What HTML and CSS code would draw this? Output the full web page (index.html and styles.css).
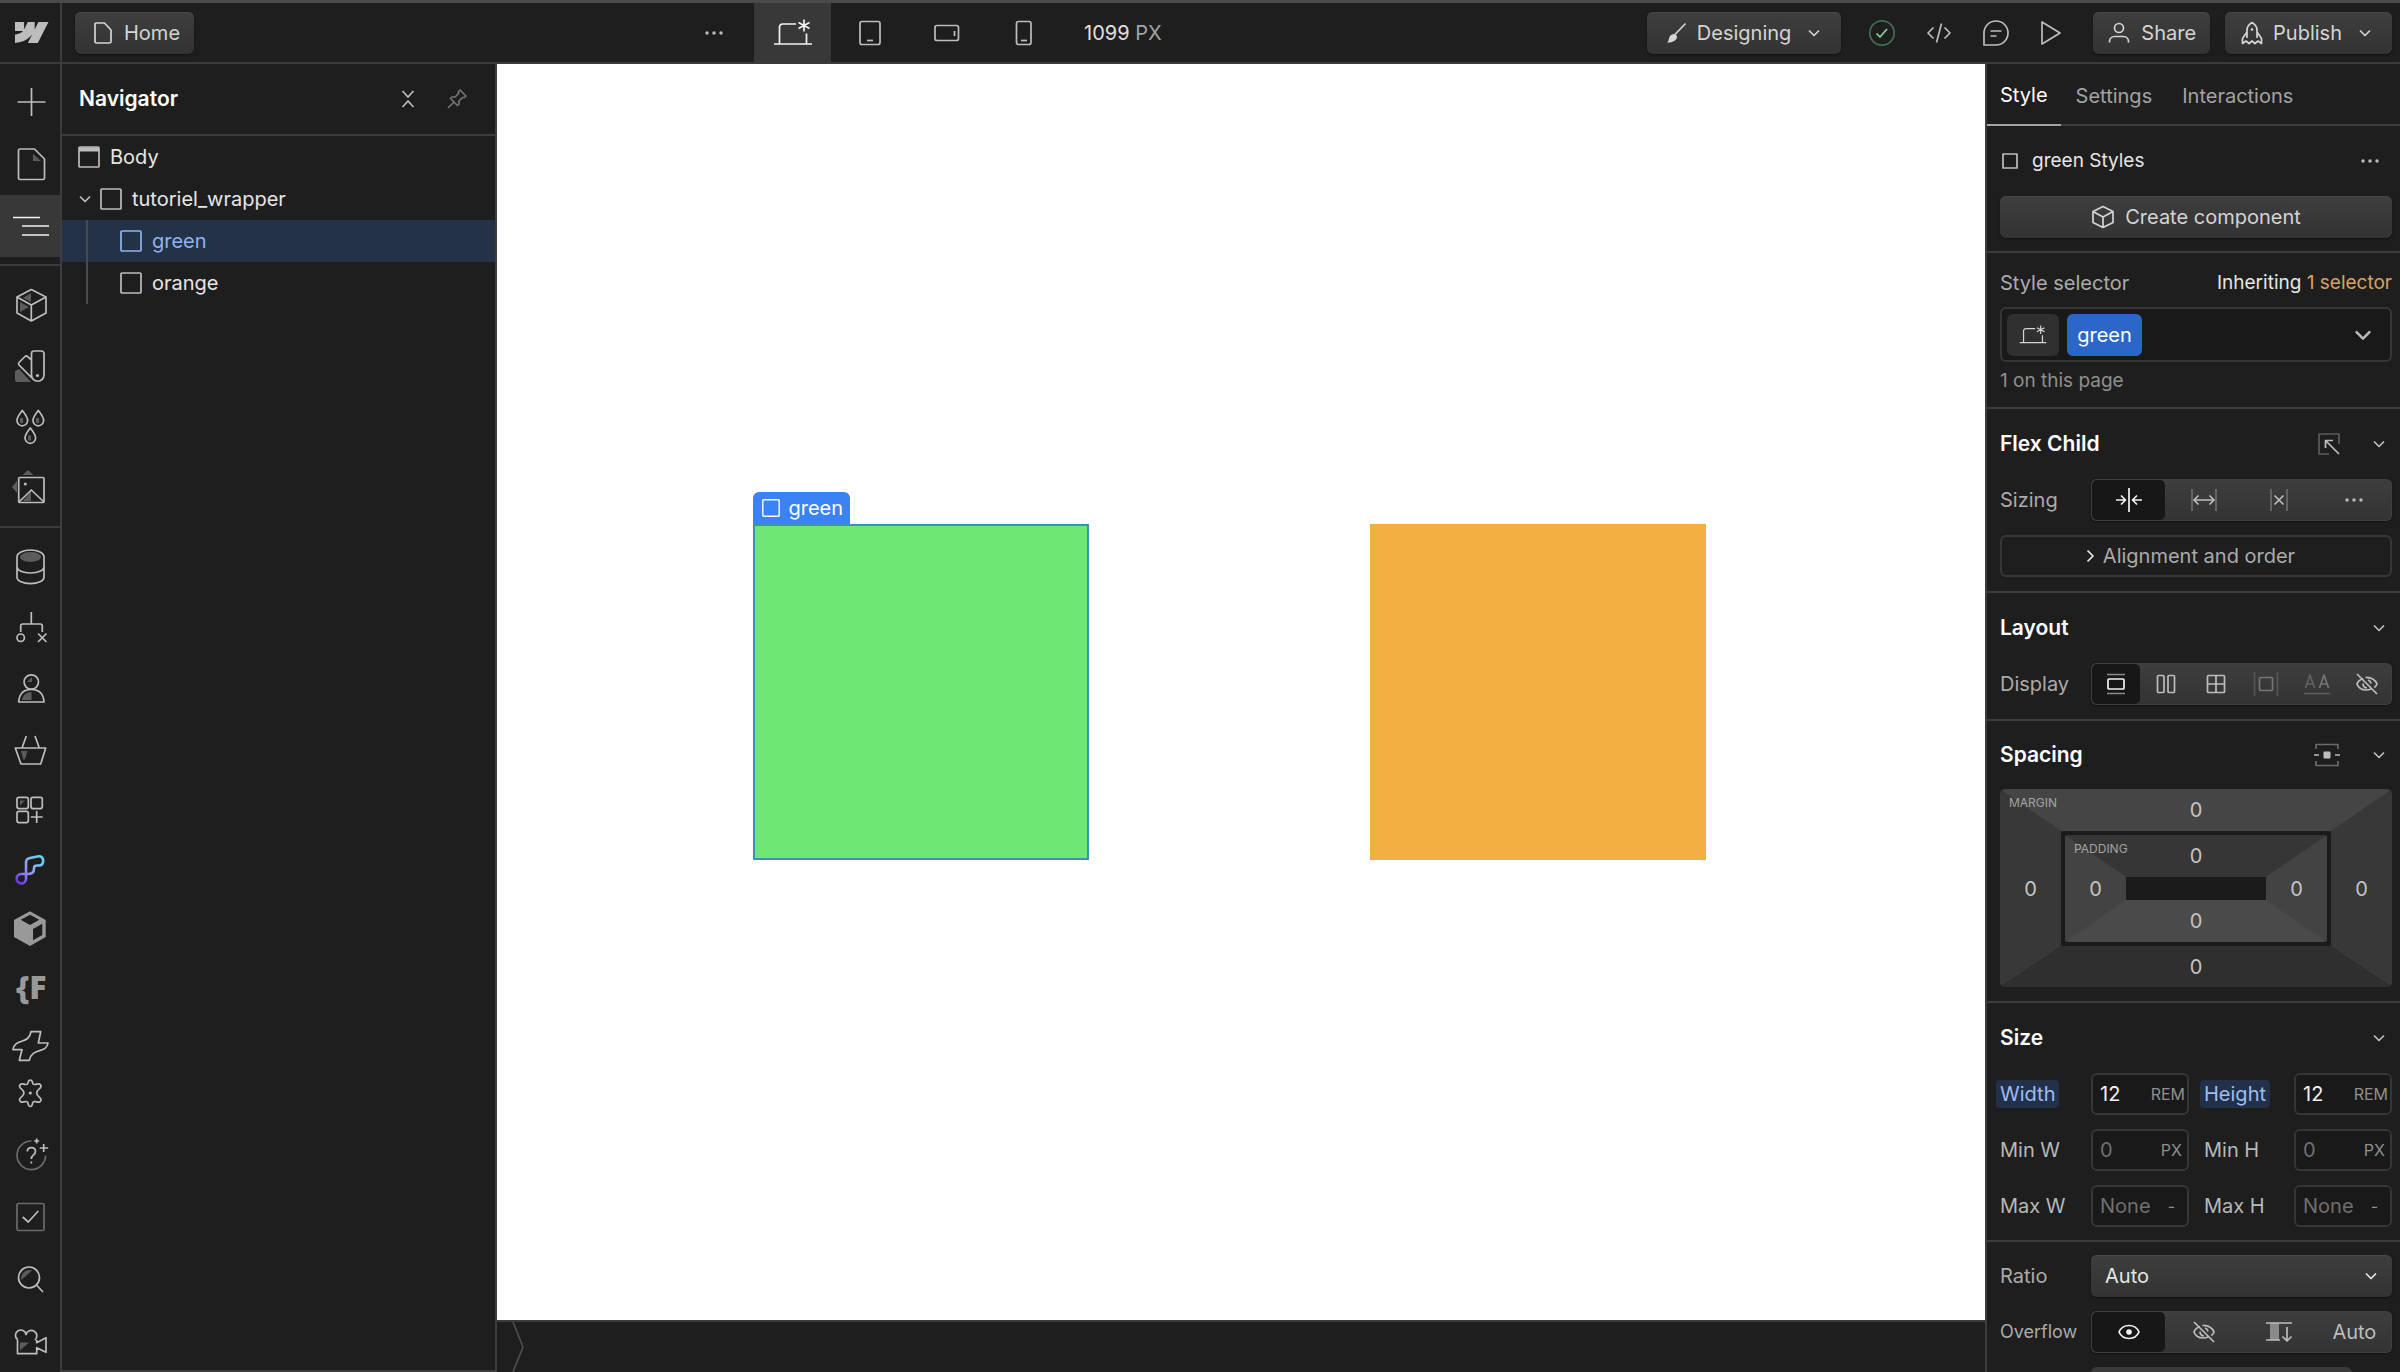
FILE: index.html
```html
<!DOCTYPE html>
<html lang="en">
<head>
<meta charset="utf-8">
<meta name="viewport" content="width=device-width, initial-scale=1">
<title>Designer – Home</title>
<link rel="stylesheet" href="styles.css">
</head>
<body>
<svg class="sprite" aria-hidden="true">
  <symbol id="i-down" viewBox="0 0 14 14"><path d="M2 4.500l5 5 5-5"/></symbol>
  <symbol id="i-dots" viewBox="0 0 20 8"><g fill="currentColor" stroke="none"><circle cx="3" cy="4" r="1.700"/><circle cx="10" cy="4" r="1.700"/><circle cx="17" cy="4" r="1.700"/></g></symbol>
  <symbol id="i-base" viewBox="0 0 40 28"><path d="M1 25h38M6.500 25V8a3 3 0 0 1 3-3H23M33.500 25V14.500M31 0.500v12M25.500 3.500l11 6M36.500 3.500l-11 6"/></symbol>
  <symbol id="i-box" viewBox="0 0 22 22"><rect x="1" y="1" width="20" height="20" rx="1"/></symbol>
  <symbol id="i-hide" viewBox="0 0 24 24"><path d="M2 2l20 20M8 6.500C4.500 8 2.500 10 2 12c1.500 4 5 6 9 6 2 0 3.500-.3 5-1M10.500 5.500C16 5 20.500 8 22 12c-.5 1.500-1.500 2.700-2.700 3.700M8 11.500a4.200 4.200 0 0 0 4 4.500M13 8a4.500 4.500 0 0 1 3 3.500"/></symbol>
</svg>

<div class="app">
  <header class="topbar">
    <a class="logo" href="#" aria-label="Dashboard"><svg width="34" height="22" viewBox="0 0 34 22"><path fill="#bdbdbd" stroke="none" d="M33.500 0 22.800 21H12.800l4.500-8.700C13.600 17.200 8 20.400 0 21v-8.500s5.100-.3 8.100-3.500H0V0h9.100v7.500L12.800 0h6.900v7.400L23.400 0z"/></svg></a>
    <div class="top-left">
      <button class="btn home"><svg width="20" height="22" viewBox="0 0 20 22"><path d="M3 1h8.500L18 8v11.500a1.500 1.500 0 0 1-1.500 1.500h-13A1.500 1.500 0 0 1 2 19.500V2a1 1 0 0 1 1-1z"/></svg>Home</button>
      <button class="plain" aria-label="More"><svg width="20" height="8"><use href="#i-dots"/></svg></button>
    </div>
    <nav class="devices" aria-label="Breakpoints">
      <button class="device on" aria-label="Base"><svg width="40" height="28"><use href="#i-base"/></svg></button>
      <button class="device" aria-label="Tablet"><svg width="22" height="26" viewBox="0 0 22 26"><rect x="1" y="1.500" width="20" height="23" rx="2"/><path d="M8 20.500h6"/></svg></button>
      <button class="device" aria-label="Mobile landscape"><svg width="26" height="18" viewBox="0 0 26 18"><rect x="1" y="1.500" width="23.500" height="15" rx="2"/><path d="M20.500 7v5"/></svg></button>
      <button class="device" aria-label="Mobile portrait"><svg width="18" height="26" viewBox="0 0 18 26"><rect x="1.500" y="1.500" width="14.500" height="23" rx="2"/><path d="M6 20.500h6"/></svg></button>
      <p class="width"><b>1099</b> PX</p>
    </nav>
    <div class="top-right">
      <button class="btn designing"><svg width="22" height="22" viewBox="0 0 22 22"><path d="M20.500 1.500 10 12.500"/><path fill="currentColor" d="M9.500 12c1.500.6 2.300 1.600 2.600 3-.6 3.500-4 5.500-10 5.500 1.500-1.200 1.600-2.500 2-4.500.6-2.600 3-4 5.400-4z" stroke="none"/></svg>Designing<svg class="end" width="14" height="14"><use href="#i-down"/></svg></button>
      <div class="tools">
        <button class="plain ok" aria-label="Saved"><svg width="28" height="28" viewBox="0 0 28 28"><circle cx="14" cy="14" r="12.200" stroke="#3f6e51"/><path d="M8.500 14.500l3.500 3.500 7-8" stroke="#7ed99b"/></svg></button>
        <button class="plain" aria-label="Code"><svg width="26" height="24" viewBox="0 0 26 24"><path d="M7.500 6.500 2 12l5.500 5.500M18.500 6.500 24 12l-5.500 5.500M15.500 2.500l-5 19"/></svg></button>
        <button class="plain" aria-label="Comments"><svg width="28" height="28" viewBox="0 0 28 28"><path d="M2 26V14A12 12 0 1 1 14 26zM8.500 12h11M8.500 17h6"/></svg></button>
        <button class="plain" aria-label="Preview"><svg width="22" height="26" viewBox="0 0 22 26"><path d="M2 2v22l18-11z"/></svg></button>
      </div>
      <button class="btn"><svg width="24" height="22" viewBox="0 0 24 22"><circle cx="12" cy="6" r="4.500"/><path d="M2.500 20.500V19a5 5 0 0 1 5-4.500h9a5 5 0 0 1 5 4.500v1.500"/></svg>Share</button>
      <button class="btn publish"><svg width="22" height="24" viewBox="0 0 22 24"><path d="M6 17V9c0-3 2.500-6 5-7.500C13.500 3 16 6 16 9v8M6 11 1.500 17.500v5L5 20l3 2.500 3-2.500 3 2.500 3-2.500 3.500 2.500v-5L16 11"/><circle cx="11" cy="8.500" r="1.300" fill="currentColor" stroke="none"/></svg>Publish<svg class="end" width="14" height="14"><use href="#i-down"/></svg></button>
    </div>
  </header>

  <aside class="rail">
    <div class="rail-group">
      <button aria-label="Add"><svg viewBox="0 0 36 36"><path d="M4.500 18h28M18.500 4v28"/></svg></button>
      <button aria-label="Pages"><svg viewBox="0 0 36 36"><path fill="#5c5c5c" stroke="none" d="M20 8l8 7h-8z"/><path d="M7 3h14.500l10 10v19a1.500 1.500 0 0 1-1.500 1.500H7A1.500 1.500 0 0 1 5.500 32V4.500A1.500 1.500 0 0 1 7 3z"/></svg></button>
      <button class="on" aria-label="Navigator"><svg viewBox="0 0 36 36"><path d="M0 9.500h27M9 18h27M9 27h27"/></svg></button>
    </div>
    <div class="rail-group">
      <button aria-label="Components"><svg viewBox="0 0 36 36"><path fill="#5c5c5c" stroke="none" d="M10 11l8-5v9zM7 15l9 5-9 5z"/><path d="M18.300 2.500 33 10v16l-14.700 8L4 26V10zM4 10l14.300 8L33 10M18.300 18v16"/></svg></button>
      <button aria-label="Variables"><svg viewBox="0 0 36 36"><path fill="#5c5c5c" stroke="none" d="M2 23l4-2 12 13H4a2 2 0 0 1-2-2z"/><path d="M18.500 5.500A2.500 2.500 0 0 1 21 3h7.500A2.500 2.500 0 0 1 31 5.500V27a6.200 6.200 0 0 1-12.500 0zM18.500 12l-4-3.500a2 2 0 0 0-2.500 0l-6 6a2 2 0 0 0 0 2.500l14 14"/><circle cx="24.500" cy="27.500" r="1.600" fill="currentColor" stroke="none"/></svg></button>
      <button aria-label="Style selectors"><svg viewBox="0 0 36 36"><path d="M9.300 1.500c-3 4-5.300 6.800-5.300 10a5.300 5.300 0 0 0 10.600 0c0-3.200-2.300-6-5.300-10zM25.300 1.500c-3 4-5.300 6.800-5.300 10a5.300 5.300 0 0 0 10.600 0c0-3.200-2.300-6-5.300-10zM17.300 19c-3 4-5.300 6.800-5.300 10a5.300 5.300 0 0 0 10.600 0c0-3.200-2.300-6-5.300-10z"/><path stroke="#5c5c5c" stroke-width="3" d="M8.500 9v5M24.500 9v5M16.500 26.500v5"/></svg></button>
      <button aria-label="Assets"><svg viewBox="0 0 36 36"><path fill="#5c5c5c" stroke="none" d="M9.500 5 15 0l5.500 5zM4 11v12l-5-6zM10 31l8-10v10z"/><rect x="5.700" y="7.500" width="25.300" height="25" rx="1"/><path d="M6 32l12.300-12L31 32"/><circle cx="12.300" cy="14" r="1.500" fill="currentColor" stroke="none"/></svg></button>
    </div>
    <div class="rail-group">
      <button aria-label="CMS"><svg viewBox="0 0 36 36"><ellipse cx="17.500" cy="8" rx="10.500" ry="5" fill="#5c5c5c" stroke="none"/><path d="M4 8c0-4 6-7 13.500-7S31 4 31 8v20c0 4-6 6.700-13.500 6.700S4 32 4 28zM4 17.500c0 4 6 6.500 13.500 6.500S31 21.500 31 17.500"/></svg></button>
      <button aria-label="Logic"><svg viewBox="0 0 36 36"><path d="M18.300 2v12M7.700 22v-6a2 2 0 0 1 2-2h17.600a2 2 0 0 1 2 2v6M25 23.500l8.500 8.500M33.500 23.500 25 32"/><circle cx="7.700" cy="27.700" r="3.700"/></svg></button>
      <button aria-label="Users"><svg viewBox="0 0 36 36"><path fill="#5c5c5c" stroke="none" d="M14 11l5-5v5zM9 29c1-5 4-8 9.500-8v8z"/><circle cx="18.300" cy="11" r="7.200"/><path d="M5.700 31c.5-8 5-12.500 12.600-12.500S30.500 23 31 31z"/></svg></button>
      <button aria-label="Ecommerce"><svg viewBox="0 0 36 36"><path fill="#5c5c5c" stroke="none" d="M8 19h6.500L12 27l-1.500 1z"/><path d="M2.300 16h30.400l-5 16H8zM13.300 4 9 16M22 4l4.300 12"/></svg></button>
      <button class="s" aria-label="Apps"><svg viewBox="0 0 36 36"><path fill="#5c5c5c" stroke="none" d="M7 8.500h5l-5 5z"/><rect x="4" y="5.300" width="11.300" height="11.300" rx="2"/><rect x="18" y="5.300" width="11.300" height="11.300" rx="2"/><rect x="4" y="19.300" width="11.300" height="11.300" rx="2"/><path d="M23.700 19v12M17.700 25h12"/></svg></button>
      <button class="s" aria-label="Flow app"><svg viewBox="0 0 36 36"><defs><linearGradient id="gf" gradientUnits="userSpaceOnUse" x1="28" y1="6" x2="6" y2="32"><stop offset="0" stop-color="#5fd6ee"/><stop offset=".35" stop-color="#8fb0f5"/><stop offset=".7" stop-color="#8a7cf0"/><stop offset="1" stop-color="#6a35e8"/></linearGradient></defs><path stroke="url(#gf)" stroke-width="2.600" d="M8.500 23h6c4 0 6.500-1.500 6.500-5v-1c0-2 1-2.500 3-2.500h2c3 0 4.200-2.500 4.200-5S28 4.800 25.500 5.300l-8.500 1.700c-3 .6-4 1.500-4 4.500V28a4.700 4.700 0 1 1-4.500-5z"/></svg></button>
      <button class="s" aria-label="Box app"><svg viewBox="0 0 36 36"><path fill="#999" stroke="none" fill-rule="evenodd" d="M17 1.300 32.700 10v17L17 36 1 27V10zM7.700 9.700 17 15l9.300-5.300L17 4.700zM20 19v11.300l9.300-5.300V13.700z"/></svg></button>
      <button class="s mark" aria-label="Finsweet app">{F</button>
      <button class="s" aria-label="Plugin"><svg viewBox="0 0 36 36"><path d="M18 3.700h9.700L25.300 15H35C33.500 26 19 19 16.300 32.300h-10L9 21.700H0C2 9.500 16 17 18 3.700z"/></svg></button>
    </div>
    <div class="rail-group last">
      <button aria-label="Site settings"><svg viewBox="0 0 36 36"><path d="M14.500 9c.8-1.200.5-4 2.800-4s2 2.800 2.800 4c1.500 1.600 4.700-.8 6.500 0 1.800 1.200 1.800 2.500.8 3.700-1 1.300-3.700 2.600-3.700 5.300s2.700 4 3.700 5.300c1 1.200 1 2.500-.8 3.700-1.800.8-5-1.600-6.500 0-.8 1.200-.5 4.500-2.800 4.500s-2-3.300-2.800-4.500c-1.500-1.600-4.700.8-6.500 0-1.800-1.200-1.800-2.500-.8-3.700 1-1.300 3.700-2.600 3.700-5.300s-2.700-4-3.700-5.300c-1-1.200-1-2.500.8-3.700 1.800-.8 5 1.600 6.500 0z"/><circle cx="17.300" cy="18" r="1.600" fill="currentColor" stroke="none"/></svg></button>
      <button aria-label="Help"><svg viewBox="0 0 36 36"><path stroke="#6b6b6b" d="M18.500 4A14.300 14.300 0 1 0 32.600 18.500"/><path d="M14.300 14.500c0-5.300 8.200-5.300 8.200 0 0 3.500-4.200 3.500-4.200 7.500M18.300 24.500v2M23.700 1.500v5M21.200 4h5M30.700 7v8M26.700 11h8.500"/></svg></button>
      <button aria-label="Audit"><svg viewBox="0 0 36 36"><rect x="4" y="4.500" width="27" height="27" rx="1.500" stroke="#6b6b6b"/><path d="M9.700 18l5.600 5 10-11"/></svg></button>
      <button aria-label="Search"><svg viewBox="0 0 36 36"><path fill="#5c5c5c" stroke="none" d="M8.500 19A8 8 0 0 1 19 9.500z"/><circle cx="16" cy="16.500" r="10.500"/><path d="M23.500 24l6.500 7"/></svg></button>
      <button aria-label="Tutorials"><svg viewBox="0 0 36 36"><path fill="#5c5c5c" stroke="none" d="M7 19.500h9l-9 8z"/><path d="M4.500 16.500A5.300 5.300 0 1 1 13 11.500a5.500 5.500 0 1 1 9 5.500M4.500 16.500v14.200h19.200v-6l9.300 4.600V14.700l-9.300 5v-2.700"/></svg></button>
    </div>
  </aside>

  <section class="navigator">
    <div class="nav-head">
      <h1>Navigator</h1>
      <button class="plain" aria-label="Collapse all"><svg width="14" height="20" viewBox="0 0 14 20"><path d="M1.500 2l5.500 6 5.500-6M1.500 18l5.500-6 5.500 6"/></svg></button>
      <button class="plain dim" aria-label="Pin"><svg width="20" height="20" viewBox="0 0 20 20"><path d="M13 1l6 6-1.500 1.500h-2L12 12v3l-1.500 1.500-7-7L5 8h3l3.500-3.500v-2zM7 13l-6 6"/></svg></button>
    </div>
    <ul class="tree">
      <li><button><svg width="22" height="22" viewBox="0 0 22 22"><rect x="1" y="1" width="20" height="20" rx="1"/><path d="M1 3.500h20" stroke-width="4"/></svg>Body</button></li>
      <li class="parent"><button class="open"><svg class="caret" width="14" height="14"><use href="#i-down"/></svg><svg width="22" height="22"><use href="#i-box"/></svg>tutoriel_wrapper</button>
        <ul>
          <li><button class="sel"><svg width="22" height="22"><use href="#i-box"/></svg>green</button></li>
          <li><button><svg width="22" height="22"><use href="#i-box"/></svg>orange</button></li>
        </ul>
      </li>
    </ul>
  </section>

  <main class="stage">
    <div class="canvas">
      <div class="block green"><span class="tag"><svg width="18" height="18" viewBox="0 0 22 22"><rect x="1" y="1" width="20" height="20" rx="1"/></svg>green</span></div>
      <div class="block orange"></div>
    </div>
    <div class="crumbs"><svg width="14" height="50" viewBox="0 0 14 50"><path d="M2 0l10 25L2 50" stroke="#4d4d4d"/></svg></div>
  </main>

  <aside class="panel">
    <nav class="tabs"><button class="on">Style</button><button>Settings</button><button>Interactions</button></nav>
    <section class="target">
      <div class="row-head"><svg width="16" height="16" viewBox="0 0 16 16"><rect x="1" y="1" width="14" height="14"/></svg><span>green Styles</span><button class="plain" aria-label="More"><svg width="20" height="8"><use href="#i-dots"/></svg></button></div>
      <button class="btn wide"><svg width="24" height="24" viewBox="0 0 24 24"><path d="M12 1.500 22 6.500v11l-10 5-10-5v-11zM2 6.500l10 5.500 10-5.500M12 12v10.500"/></svg>Create component</button>
    </section>
    <section class="selector">
      <p class="sel-head"><span>Style selector</span><span class="inherit">Inheriting <a href="#">1 selector</a></span></p>
      <div class="combo"><button class="chip" aria-label="Base breakpoint"><svg width="28" height="20"><use href="#i-base"/></svg></button><button class="chip blue">green</button><button class="plain" aria-label="Show selectors"><svg width="20" height="20" viewBox="0 0 14 14"><path d="M2 4.500l5 5 5-5"/></svg></button></div>
      <p class="note">1 on this page</p>
    </section>
    <section class="flexchild">
      <h2><span>Flex Child</span><svg width="22" height="22" viewBox="0 0 22 22"><path stroke="#5c5c5c" d="M11 21H1V1h20v10"/><path d="M21 21 8 8M7.500 15V7.500H15"/></svg><svg class="end" width="14" height="14"><use href="#i-down"/></svg></h2>
      <div class="row"><span>Sizing</span>
        <div class="seg four" role="group" aria-label="Sizing">
          <button class="on" aria-label="Shrink"><svg width="28" height="24" viewBox="0 0 28 24"><path d="M14 0v24M1 12h9M6 7.500l4.500 4.500L6 16.500M27 12h-9M22 7.500 17.500 12l4.500 4.500"/></svg></button>
          <button aria-label="Grow"><svg width="28" height="24" viewBox="0 0 28 24"><path stroke="#6b6b6b" d="M2 1v22M26 1v22"/><path d="M4 12h20M8.500 7.500 4 12l4.500 4.500M19.500 7.500 24 12l-4.500 4.500"/></svg></button>
          <button aria-label="Don't shrink or grow"><svg width="20" height="24" viewBox="0 0 20 24"><path stroke="#6b6b6b" d="M2 1v22M18 1v22"/><path d="M5.500 7.500l9 9M14.500 7.500l-9 9"/></svg></button>
          <button aria-label="Customize"><svg width="20" height="8"><use href="#i-dots"/></svg></button>
        </div>
      </div>
      <button class="outline"><svg width="10" height="14" viewBox="0 0 10 14"><path d="M2.500 1.500 8 7l-5.500 5.500"/></svg>Alignment and order</button>
    </section>
    <section class="layout">
      <h2><span>Layout</span><svg class="end" width="14" height="14"><use href="#i-down"/></svg></h2>
      <div class="row"><span>Display</span>
        <div class="seg six" role="group" aria-label="Display">
          <button class="on" aria-label="Block"><svg width="20" height="22" viewBox="0 0 20 22"><path stroke="#8a8a8a" d="M1 1.500h18M1 20.500h18"/><rect x="2" y="6" width="16" height="10" rx="1"/></svg></button>
          <button aria-label="Flex"><svg width="20" height="20" viewBox="0 0 20 20"><rect x="1.500" y="1.500" width="6.500" height="17" rx="1"/><rect x="12" y="1.500" width="6.500" height="17" rx="1"/></svg></button>
          <button aria-label="Grid"><svg width="20" height="20" viewBox="0 0 20 20"><rect x="1.500" y="1.500" width="17" height="17" rx="1"/><path d="M10 1.500v17M1.500 10h17"/></svg></button>
          <button class="dim" aria-label="Inline block"><svg width="26" height="24" viewBox="0 0 26 24"><path stroke="#555" d="M1.500 0v24M24.500 0v24"/><rect x="6.500" y="5.500" width="13" height="13" rx="1"/></svg></button>
          <button class="dim" aria-label="Inline"><svg width="26" height="22" viewBox="0 0 26 22"><path stroke="#606060" d="M1.500 15 6 2l4.500 13M3 11h6M0 20.500h26"/><path d="M15.500 15 20 2l4.500 13M17 11h6"/></svg></button>
          <button aria-label="None"><svg width="24" height="24"><use href="#i-hide"/></svg></button>
        </div>
      </div>
    </section>
    <section class="spacing">
      <h2><span>Spacing</span><svg width="26" height="24" viewBox="0 0 26 24"><path stroke="#6b6b6b" d="M2 6V1.500h22V6M2 18v4.500h22V18"/><path d="M0 12h5M21 12h5"/><rect x="9.500" y="8.500" width="7" height="7" rx="1" fill="currentColor" stroke="none"/></svg><svg class="end" width="14" height="14"><use href="#i-down"/></svg></h2>
      <div class="margin-box">
        <small>MARGIN</small>
        <button class="t">0</button><button class="l">0</button>
        <div class="padding-box">
          <small>PADDING</small>
          <button class="t">0</button><button class="l">0</button><button class="r">0</button><button class="b">0</button>
        </div>
        <button class="r">0</button><button class="b">0</button>
      </div>
    </section>
    <section class="size">
      <h2><span>Size</span><svg class="end" width="14" height="14"><use href="#i-down"/></svg></h2>
      <div class="fields">
        <label class="set" for="w"><span>Width</span></label><div class="field"><input id="w" value="12"><button>REM</button></div>
        <label class="set" for="h"><span>Height</span></label><div class="field"><input id="h" value="12"><button>REM</button></div>
        <label for="minw">Min W</label><div class="field px"><input id="minw" placeholder="0"><button>PX</button></div>
        <label for="minh">Min H</label><div class="field px"><input id="minh" placeholder="0"><button>PX</button></div>
        <label for="maxw">Max W</label><div class="field none"><input id="maxw" placeholder="None"><button>-</button></div>
        <label for="maxh">Max H</label><div class="field none"><input id="maxh" placeholder="None"><button>-</button></div>
      </div>
    </section>
    <section class="ratio">
      <div class="row"><label for="ratio">Ratio</label>
        <div class="select"><select id="ratio"><option>Auto</option></select><svg width="14" height="14"><use href="#i-down"/></svg></div></div>
      <div class="row"><span class="tight">Overflow</span>
        <div class="seg four" role="group" aria-label="Overflow">
          <button class="on" aria-label="Visible"><svg width="22" height="16" viewBox="0 0 22 16"><path d="M1 8c2-4.500 6-6.500 10-6.500S19 3.500 21 8c-2 4.500-6 6.500-10 6.500S3 12.500 1 8z"/><circle cx="11" cy="8" r="2.800" fill="currentColor" stroke="none"/></svg></button>
          <button aria-label="Hidden"><svg width="24" height="24"><use href="#i-hide"/></svg></button>
          <button aria-label="Scroll"><svg width="26" height="22" viewBox="0 0 26 22"><path fill="#8a8a8a" stroke="none" d="M4 2h9v17H4z"/><path d="M0 2h26M0 19h14M21 6v14M16.500 15.500 21 20l4.500-4.500"/></svg></button>
          <button>Auto</button>
        </div>
      </div>
      <div class="row"><span></span><div class="peek"></div></div>
    </section>
  </aside>
</div>
</body>
</html>
```
FILE: styles.css
```css
:root {
  --bg: #1e1e1e;
  --line: #3c3c3c;
  --raised: #383838;
  --text: #f2f2f2;
  --soft: #d4d4d4;
  --muted: #ababab;
}

* { box-sizing: border-box; }

body {
  margin: 0;
  background: var(--bg);
  color: var(--soft);
  font: 20px/24px Inter, "Liberation Sans", sans-serif;
}

h1, h2, p, ul { margin: 0; padding: 0; }
ul { list-style: none; }
button, input, select { font: inherit; color: inherit; margin: 0; }
button { padding: 0; border: 0; background: none; cursor: pointer; }
svg { flex: none; fill: none; stroke: currentColor; stroke-width: 1.7; stroke-linejoin: round; overflow: visible; }
.sprite { position: absolute; width: 0; height: 0; }

.app {
  display: grid;
  grid-template: 64px minmax(0, 1fr) / 62px 435px minmax(0, 1fr) 415px;
  height: 100vh;
  overflow: hidden;
}

/* Top bar */
.topbar {
  grid-column: 1 / -1;
  display: flex;
  border-top: 3px solid #4a4a4d;
  border-bottom: 2px solid var(--line);
}
.logo {
  width: 62px;
  display: flex;
  align-items: center;
  justify-content: center;
  padding-left: 3px;
  border-right: 2px solid var(--line);
}
.top-left {
  width: 692px;
  display: flex;
  align-items: center;
  justify-content: space-between;
  padding: 0 30px 0 13px;
}
.plain { display: flex; align-items: center; justify-content: center; color: #bdbdbd; }
.dim { color: #757575; }
.btn {
  display: flex;
  align-items: center;
  justify-content: center;
  gap: 10px;
  height: 42px;
  padding: 0 14px;
  border-radius: 6px;
  background: linear-gradient(#3e3e3e, #333);
  box-shadow: inset 0 1px #484848, 0 1px 2px #111;
  color: #d4d4d4;
}
.btn .end { margin-left: 6px; }
.home { padding: 0 14px 0 18px; gap: 11px; }
.devices { display: flex; align-items: stretch; }
.device { width: 77px; display: flex; align-items: center; justify-content: center; color: #bdbdbd; }
.device.on { background: var(--raised); color: #f2f2f2; }
.width { align-self: center; margin-left: 22px; color: #a3a3a3; }
.width b { font-weight: 400; color: #e0e0e0; }
.top-right { flex: 1; display: flex; align-items: center; justify-content: flex-end; gap: 15px; padding-right: 8px; }
.designing { padding: 0 20px 0 18px; }
.publish { padding: 0 20px 0 16px; }
.tools { display: flex; gap: 30px; padding: 0 16px 0 12px; }

/* Icon rail */
.rail { display: flex; flex-direction: column; border-right: 2px solid var(--line); min-height: 0; }
.rail-group { padding: 8px 0; border-bottom: 2px solid var(--line); }
.rail-group button { display: flex; align-items: center; justify-content: center; width: 60px; height: 61px; padding-left: 2px; color: #bdbdbd; }
.rail-group svg { width: 36px; height: 36px; }
.rail-group .on { background: var(--raised); color: #f2f2f2; }
.rail-group .s { height: 59px; }
.rail-group:first-child { padding: 7px 0; }
.rail-group:first-child button { height: 62px; }
.rail-group:nth-child(3) { flex: 1; min-height: 0; padding-bottom: 0; border: 0; }
.rail-group.last { padding: 0; border: 0; }
.rail-group.last button { height: 62px; }
.rail-group .mark { font: 800 32px/40px "Open Sans", "Liberation Sans", sans-serif; color: #999; }

/* Navigator */
.navigator { border-right: 2px solid var(--line); border-bottom: 2px solid var(--line); }
.nav-head { display: flex; align-items: center; gap: 32px; height: 72px; padding: 0 28px 0 17px; border-bottom: 2px solid var(--line); }
h1, h2 { font-size: 21px; line-height: 24px; font-weight: 600; color: #fff; }
h1 { flex: 1; }
.tree button { display: flex; align-items: center; gap: 10px; width: 100%; height: 42px; padding-left: 16px; color: #e6e6e6; }
.tree svg { color: #bdbdbd; }
.tree .caret { margin-right: -2px; }
.parent { position: relative; }
.parent ul button { padding-left: 58px; }
.parent ul::before { content: ""; position: absolute; left: 24px; top: 42px; bottom: 0; width: 2px; background: #444b55; }
.tree .sel { background: #243248; color: #8fb4f0; }
.tree .sel svg { color: #8fb4f0; }

/* Canvas */
.stage { display: flex; flex-direction: column; min-width: 0; }
.canvas { flex: 1; display: flex; align-items: center; justify-content: center; gap: 281px; padding-right: 24px; background: #fff; }
.block { position: relative; width: 336px; height: 336px; }
.green { background: #6ee872; border: 2px solid #3f8fb8; }
.orange { background: #f3b042; }
.tag {
  position: absolute;
  left: -2px;
  bottom: 100%;
  margin-bottom: 2px;
  display: flex;
  align-items: center;
  gap: 9px;
  height: 32px;
  padding: 0 7px 0 9px;
  border-radius: 6px 6px 0 0;
  background: #3b82f6;
  color: #fff;
}
.crumbs { height: 52px; padding-left: 14px; border-top: 2px solid var(--line); }

/* Style panel */
.panel { border-left: 2px solid var(--line); overflow: hidden; min-height: 0; }
.panel section { padding: 0 8px 0 13px; border-bottom: 2px solid var(--line); }
.tabs { display: flex; height: 62px; border-bottom: 2px solid var(--line); }
.tabs button { height: 62px; padding: 2px 15px 0; color: #a3a3a3; }
.tabs .on { padding: 2px 13px 0; color: #fff; border-bottom: 2px solid #a3a3a3; }
.row-head { display: flex; align-items: center; gap: 14px; height: 70px; padding: 0 12px 0 2px; font-size: 19px; color: #e6e6e6; }
.row-head svg { color: #bdbdbd; }
.row-head span { flex: 1; }
.wide { width: 100%; }
.panel .target { padding-bottom: 13px; }
.sel-head { display: flex; justify-content: space-between; padding: 18px 0 12px; color: var(--muted); }
.inherit { font-size: 19px; color: #e6e6e6; }
.inherit a { color: #d9a163; text-decoration: none; }
.combo { display: flex; align-items: center; gap: 8px; height: 55px; padding: 0 17px 0 5px; border: 2px solid #363636; border-radius: 6px; background: #191919; }
.combo .plain { margin-left: auto; }
.chip { display: flex; align-items: center; justify-content: center; width: 52px; height: 42px; border-radius: 6px; background: #303030; color: #d4d4d4; }
.blue { width: 75px; background: #2b67c9; color: #fff; }
.note { padding: 7px 0 14px; font-size: 19px; color: #8f8f8f; }
h2 { display: flex; align-items: center; height: 70px; padding-right: 6px; color: #fff; }
.spacing h2 { height: 68px; }
h2 span { flex: 1; }
h2 svg { color: #bdbdbd; }
h2 .end { margin-left: 32px; }
.row { display: grid; grid-template-columns: 91px 1fr; align-items: center; color: var(--muted); }
.tight { font-size: 18px; }
.seg { display: grid; height: 42px; border-radius: 6px; background: linear-gradient(#3e3e3e, #333); box-shadow: inset 0 0 0 1px #404040, 0 1px 2px #111; }
.four { grid-template-columns: repeat(4, 1fr); }
.six { grid-template-columns: 50px repeat(5, 1fr); }
.seg button { display: flex; align-items: center; justify-content: center; color: #bdbdbd; }
.seg .on { margin: 1px; border-radius: 5px; background: #171717; color: #f2f2f2; }
.seg .dim { color: #757575; }
.outline { display: flex; align-items: center; justify-content: center; gap: 8px; width: 100%; height: 42px; margin: 14px 0; padding-right: 12px; border: 2px solid #363636; border-radius: 6px; color: var(--muted); }
.outline svg { color: #e6e6e6; }
.panel .layout { padding-bottom: 14px; }

.margin-box, .padding-box { position: relative; display: grid; justify-items: center; align-items: center; color: #c4c4c4; }
.margin-box {
  grid-template: 42px 115px 41px / 61px minmax(0, 1fr) 61px;
  margin-bottom: 14px;
  border-radius: 5px;
  overflow: hidden;
}
.padding-box { grid-area: 2 / 2; justify-self: stretch; height: 115px; grid-template: 42px 23px 42px / 61px minmax(0, 1fr) 61px; border: 4px solid #1b1b1b; border-radius: 6px; background: #1b1b1b; }
/* Mitred borders give each side its own shade */
.margin-box::before, .padding-box::before { content: ""; position: absolute; inset: 0; border-style: solid; }
.margin-box::before { border-width: 42px 61px 41px; border-color: #454545 #383838 #2f2f2f; }
.padding-box::before { border-width: 42px 61px; border-color: #363636 #434343 #4a4a4a; border-radius: 3px; }
.margin-box button { position: relative; line-height: 24px; }
.margin-box .t { grid-area: 1 / 2; }
.margin-box .l { grid-area: 2 / 1; }
.margin-box .r { grid-area: 2 / 3; }
.margin-box .b { grid-area: 3 / 2; }
small { position: absolute; left: 9px; top: 5px; font-size: 12px; line-height: 18px; color: #a3a3a3; }

.fields { display: grid; grid-template-columns: 91px minmax(0, 1fr) 105px minmax(0, 1fr); row-gap: 14px; align-items: center; padding-bottom: 13px; }
.fields label:nth-of-type(even) { padding-left: 15px; }
.fields label { color: #b8b8b8; }
.set span { display: inline-block; margin-left: -4px; padding: 2px 4px; border-radius: 4px; background: #22304a; color: #9dbdf2; }
.field { display: flex; align-items: center; height: 42px; padding: 0 2px 0 7px; border: 2px solid #363636; border-radius: 6px; background: #191919; }
.field input { flex: 1; width: 0; min-width: 0; padding: 0; border: 0; outline: 0; background: none; color: #f2f2f2; }
.field input::placeholder { color: #6f6f6f; opacity: 1; }
.field button { font-size: 16px; color: #8f8f8f; }
.field.px { padding-right: 5px; }
.field.none { padding-right: 12px; }
.panel .ratio { border: 0; padding-top: 13px; display: grid; row-gap: 14px; }
.select { position: relative; }
.select select { appearance: none; display: block; width: 100%; height: 42px; padding: 0 14px; border: 0; border-radius: 6px; background: linear-gradient(#3e3e3e, #333); color: #e6e6e6; box-shadow: inset 0 1px #484848, 0 1px 2px #111; }
.select svg { position: absolute; right: 14px; top: 14px; pointer-events: none; color: #e6e6e6; }
.peek { height: 42px; margin-right: 40px; border-radius: 6px; background: #3a3a3a; }
```
